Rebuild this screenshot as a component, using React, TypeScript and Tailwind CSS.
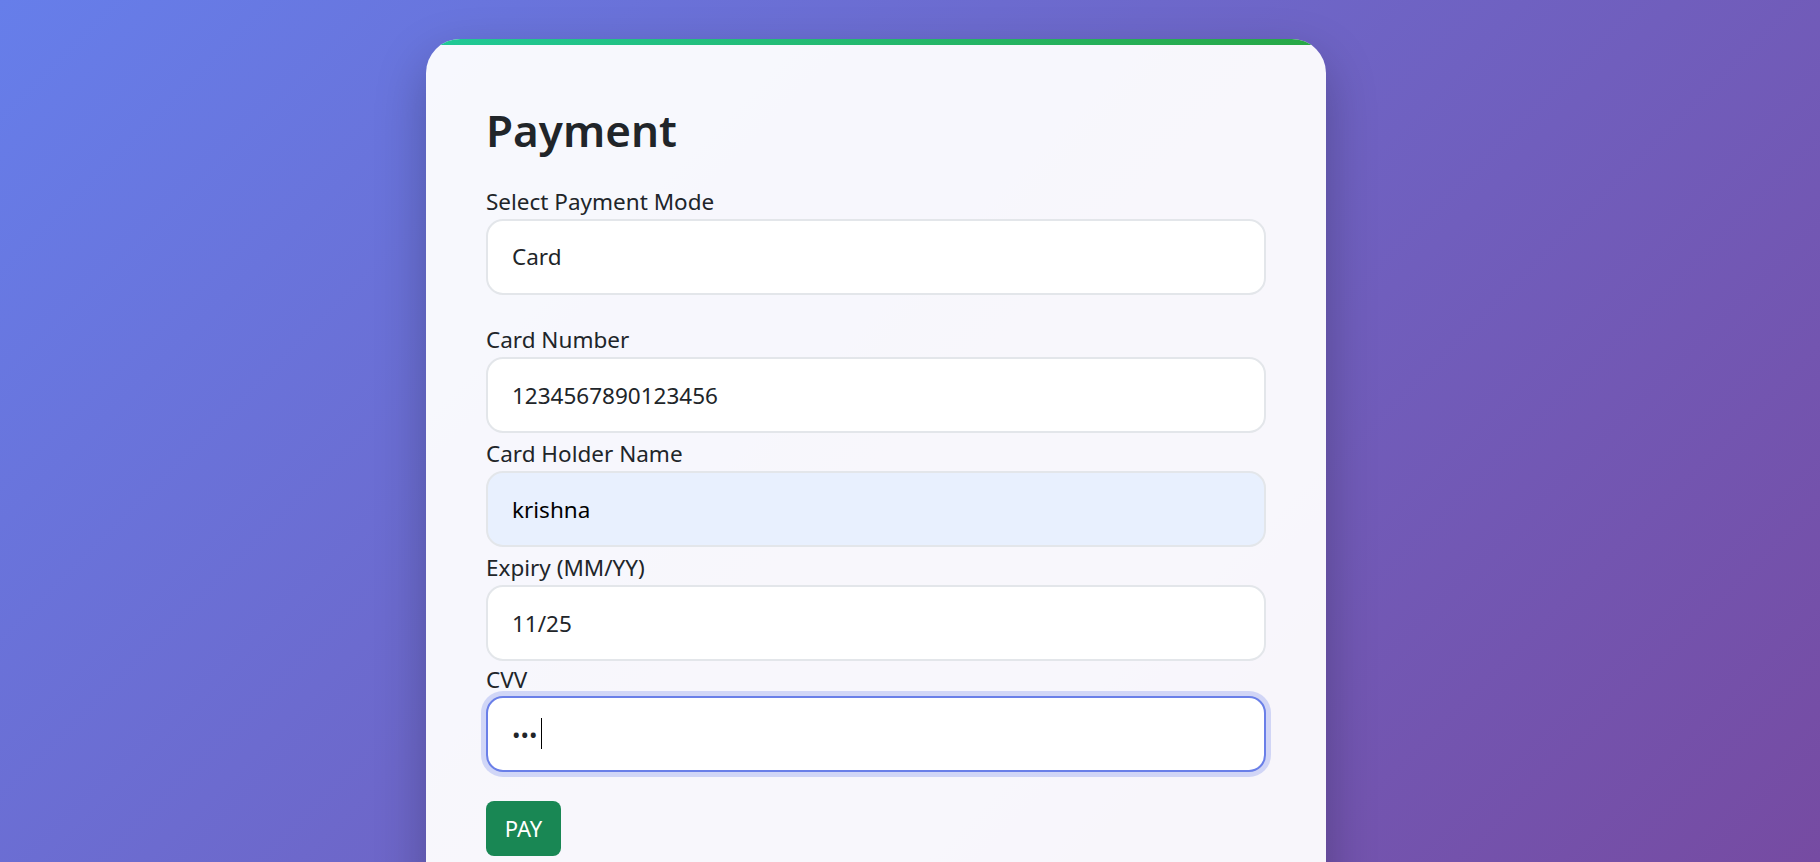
import React from 'react';

const labelCls = "block pt-[3px] text-[22.5px] leading-[35px] text-[#212529]";
// base input look, colours are added per field so they don't clash
const inputCls =
  "block w-full h-[76px] rounded-[17px] border-2 px-[24px] text-[22.5px] outline-none";
const normalCls = "border-[#e3e6ea] bg-white text-[#212529]";

const Payment = () => {
  return (
    <div className="min-h-screen bg-fixed bg-[linear-gradient(135deg,#667eea_0%,#764ba2_100%)] font-['Noto_Sans',sans-serif] flex justify-center pr-[68px] pt-[39px] pb-[40px]">
      <div className="w-[900px] rounded-[34px] overflow-hidden bg-white/95 shadow-[0_20px_50px_rgba(0,0,0,0.25)]">
        <div className="h-[6px] bg-[linear-gradient(90deg,#20c997,#28a745)]" />

        <form className="px-[60px] pt-[59px] pb-[60px]" onSubmit={(e) => e.preventDefault()}>
          <h1 className="text-[44px] leading-[52px] font-semibold text-[#212529] mb-[25px]">Payment</h1>

          <div className="mb-[24px]">
            <label className={labelCls}>Select Payment Mode</label>
            <select className={`${inputCls} ${normalCls} appearance-none`} defaultValue="card">
              <option value="card">Card</option>
              <option value="upi">UPI</option>
              <option value="cod">Cash on Delivery</option>
            </select>
          </div>

          <label className={labelCls}>Card Number</label>
          <input className={`${inputCls} ${normalCls}`} type="text" defaultValue="1234567890123456" />

          <label className={labelCls}>Card Holder Name</label>
          <input
            className={`${inputCls} border-[#e3e6ea] bg-[#e8f0fe] text-black`}
            type="text"
            defaultValue="krishna"
          />

          <label className={labelCls}>Expiry (MM/YY)</label>
          <input className={`${inputCls} ${normalCls}`} type="text" defaultValue="11/25" />

          <label className="block pt-[2px] text-[22.5px] leading-[33px] text-[#212529]">CVV</label>
          <div className="relative">
            <input
              className={`${inputCls} border-[#6a7fe8] bg-white text-[#212529] shadow-[0_0_0_5px_rgba(102,126,234,0.27)]`}
              type="password"
              defaultValue="123"
            />
            {/* caret */}
            <span className="absolute left-[55px] top-[22px] h-[31px] w-px bg-black" />
          </div>

          <button
            type="submit"
            className="mt-[29px] h-[55px] w-[75px] rounded-[8px] bg-[#198754] text-[22px] text-white"
          >
            PAY
          </button>
        </form>
      </div>
    </div>
  );
};

export default Payment;
